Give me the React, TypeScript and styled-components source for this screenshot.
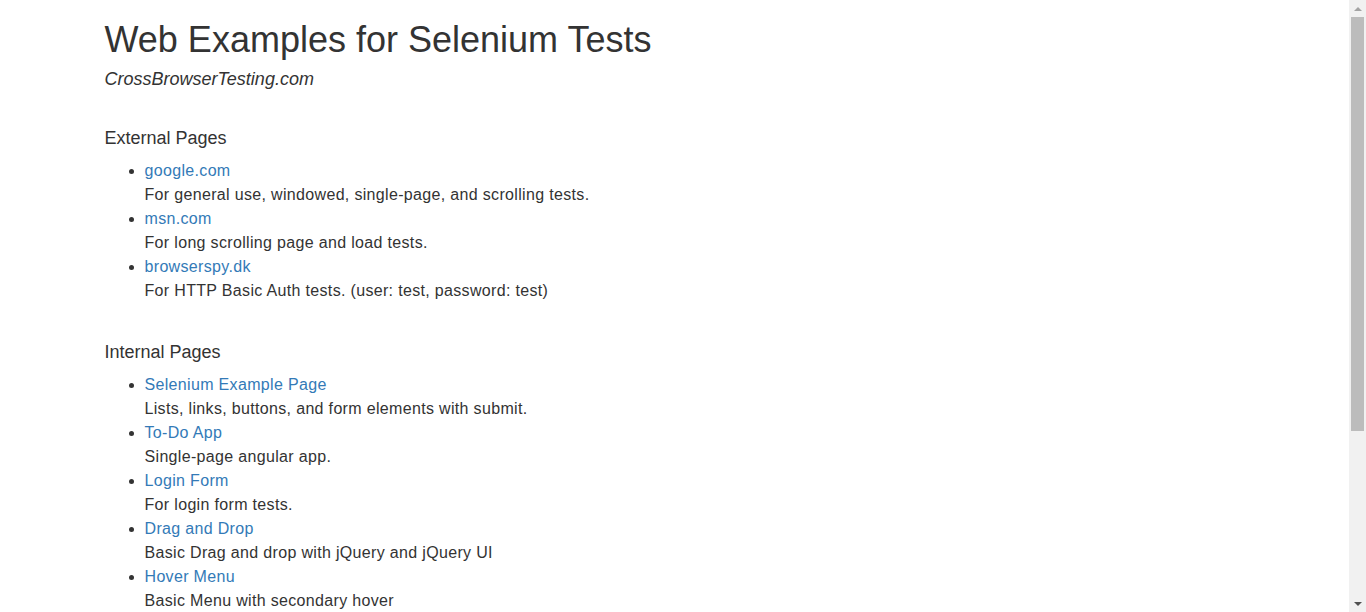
import { createGlobalStyle } from 'styled-components'
import styled from 'styled-components'

const GlobalStyle = createGlobalStyle`
  html, body {
    margin: 0;
    padding: 0;
    height: 100%;
    overflow: hidden;
    background: #fff;
  }
  body {
    font-family: "Liberation Sans", Arial, Helvetica, sans-serif;
    font-size: 16px;
    line-height: 1.5;
    color: #333;
  }
`

const Screen = styled.div`
  display: flex;
  height: 612px;
  width: 100%;
`

const Page = styled.main`
  flex: 1;
  overflow: hidden;
`

const Container = styled.div`
  width: 1170px;
  margin: 0 auto;
  padding: 0 15px;
  box-sizing: border-box;
`

const Title = styled.h1`
  font-size: 36px;
  font-weight: 400;
  line-height: 1.1;
  margin: 20px 0 10px;
`

const Subtitle = styled.p`
  font-size: 18px;
  font-style: italic;
  line-height: 1.1;
  margin: 0;
`

const SectionTitle = styled.h3<{ $gap: number }>`
  font-size: 18px;
  font-weight: 400;
  line-height: 1.1;
  margin: ${props => props.$gap}px 0 10px;
`

const List = styled.ul`
  margin: 0;
  padding-left: 40px;
  list-style: disc;
`

const Item = styled.li`
  letter-spacing: 0.33px;
`

const ItemLink = styled.a`
  color: #337ab7;
  text-decoration: none;
`

const ItemText = styled.div``

const Scrollbar = styled.div`
  width: 17px;
  flex-shrink: 0;
  background: #f1f1f1;
  display: flex;
  flex-direction: column;
  align-items: center;
`

const Arrow = styled.div<{ $dir: 'up' | 'down'; $color: string }>`
  width: 17px;
  height: 17px;
  display: flex;
  align-items: center;
  justify-content: center;

  &::before {
    content: '';
    width: 0;
    height: 0;
    border-left: 4px solid transparent;
    border-right: 4px solid transparent;
    ${props => props.$dir === 'up'
      ? `border-bottom: 4px solid ${props.$color};`
      : `border-top: 4px solid ${props.$color};`}
  }
`

const Track = styled.div`
  flex: 1;
  width: 100%;
  display: flex;
  justify-content: center;
`

const Thumb = styled.div`
  width: 13px;
  height: 414px;
  background: #bcbcbc;
`

const external = [
  { name: 'google.com', text: 'For general use, windowed, single-page, and scrolling tests.' },
  { name: 'msn.com', text: 'For long scrolling page and load tests.' },
  { name: 'browserspy.dk', text: 'For HTTP Basic Auth tests. (user: test, password: test)' },
]

const internal = [
  { name: 'Selenium Example Page', text: 'Lists, links, buttons, and form elements with submit.' },
  { name: 'To-Do App', text: 'Single-page angular app.' },
  { name: 'Login Form', text: 'For login form tests.' },
  { name: 'Drag and Drop', text: 'Basic Drag and drop with jQuery and jQuery UI' },
  { name: 'Hover Menu', text: 'Basic Menu with secondary hover' },
]

function App() {
  return (
    <>
      <GlobalStyle />
      <Screen>
        <Page>
          <Container>
            <Title>Web Examples for Selenium Tests</Title>
            <Subtitle>CrossBrowserTesting.com</Subtitle>
            <SectionTitle $gap={40}>External Pages</SectionTitle>
            <List>
              {external.map(item => (
                <Item key={item.name}>
                  <ItemLink href="#">{item.name}</ItemLink>
                  <ItemText>{item.text}</ItemText>
                </Item>
              ))}
            </List>
            <SectionTitle $gap={40}>Internal Pages</SectionTitle>
            <List>
              {internal.map(item => (
                <Item key={item.name}>
                  <ItemLink href="#">{item.name}</ItemLink>
                  <ItemText>{item.text}</ItemText>
                </Item>
              ))}
            </List>
          </Container>
        </Page>
        <Scrollbar>
          <Arrow $dir="up" $color="#a3a3a3" />
          <Track>
            <Thumb />
          </Track>
          <Arrow $dir="down" $color="#505050" />
        </Scrollbar>
      </Screen>
    </>
  )
}

export default App
